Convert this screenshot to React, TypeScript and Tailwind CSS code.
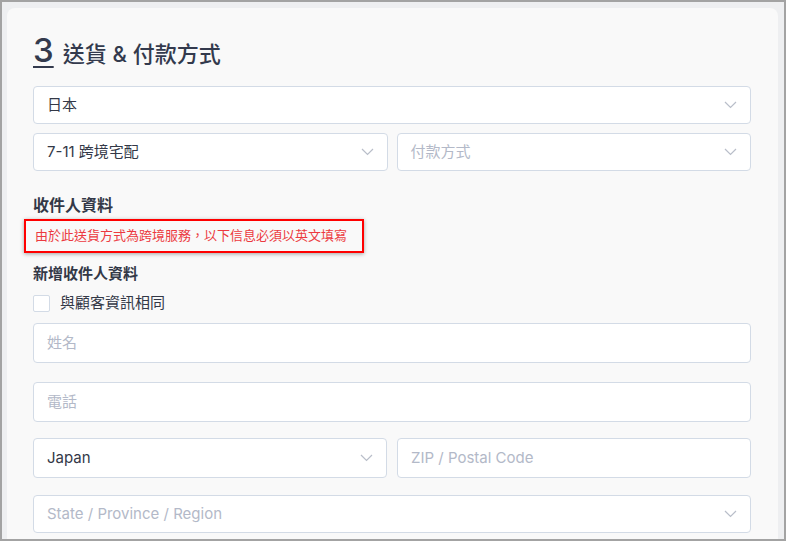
const Chevron = () => (
  <svg width="13" height="8" viewBox="0 0 13 8" fill="none" className="shrink-0">
    <path d="M1 1l5.5 5.5L12 1" stroke="#b9bec9" strokeWidth="1.2" />
  </svg>
);

const Select = ({ value, placeholder, className = '' }: { value?: string; placeholder?: string; className?: string }) => (
  <div className={`flex items-center justify-between h-[38px] px-[13px] bg-white border border-[#d3dbe6] rounded-[4px] ${className}`}>
    <span className={`text-[15px] ${value ? 'text-[#333847]' : 'text-[#b3b9c8]'}`}>{value ?? placeholder}</span>
    <Chevron />
  </div>
);

const Input = ({ placeholder, className = '' }: { placeholder: string; className?: string }) => (
  <div className={`flex items-center h-[40px] px-[13px] bg-white border border-[#d3dbe6] rounded-[4px] ${className}`}>
    <span className="text-[15px] text-[#b3b9c8]">{placeholder}</span>
  </div>
);

export default function App() {
  return (
    <div
      className="w-[786px] h-[541px] overflow-hidden bg-[#eeeff1] border-2 border-[#a3a3a3] pt-[6px] pl-[5px] pr-[6px]"
      style={{ fontFamily: '"Inter", "Noto Sans CJK TC", sans-serif' }}
    >
      <div className="w-[771px] h-[560px] bg-[#f9f9f9] rounded-[8px] pl-[26px] pr-[27px] pt-[26px]">
        {/* Title */}
        <div className="flex items-baseline gap-[9px] text-[#333a4d] h-[42px]">
          <span className="text-[33px] leading-none font-medium underline decoration-2 underline-offset-[4px]">3</span>
          <span className="text-[22px] leading-none font-medium">送貨 &amp; 付款方式</span>
        </div>

        <Select value="日本" className="mt-[10px]" />
        <div className="flex gap-[9px] mt-[9px]">
          <Select value="7-11 跨境宅配" className="flex-1" />
          <Select placeholder="付款方式" className="flex-1" />
        </div>

        {/* Recipient */}
        <div className="mt-[24px] text-[16px] font-semibold text-[#333847] leading-[20px]">收件人資料</div>
        <div className="-ml-[9px] mt-[4px] w-[340px] h-[34px] flex items-center pl-[9px] border-2 border-[#ff0000] shadow-[0_1px_4px_rgba(0,0,0,0.35)]">
          <span className="text-[13px] text-[#ec3a40]">由於此送貨方式為跨境服務，以下信息必須以英文填寫</span>
        </div>
        <div className="mt-[11px] text-[15px] font-semibold text-[#333847] leading-[20px]">新增收件人資料</div>
        <div className="flex items-center mt-[9px] gap-[10px]">
          <div className="w-[17px] h-[17px] bg-white border border-[#d3dbe6] rounded-[2px]" />
          <span className="text-[15px] text-[#333847] leading-[20px]">與顧客資訊相同</span>
        </div>

        <Input placeholder="姓名" className="mt-[10px]" />
        <Input placeholder="電話" className="mt-[19px]" />
        <div className="flex gap-[10px] mt-[16px]">
          <Select value="Japan" className="flex-1 h-[40px]" />
          <Input placeholder="ZIP / Postal Code" className="flex-1" />
        </div>
        <Select placeholder="State / Province / Region" className="mt-[17px]" />
      </div>
    </div>
  );
}
